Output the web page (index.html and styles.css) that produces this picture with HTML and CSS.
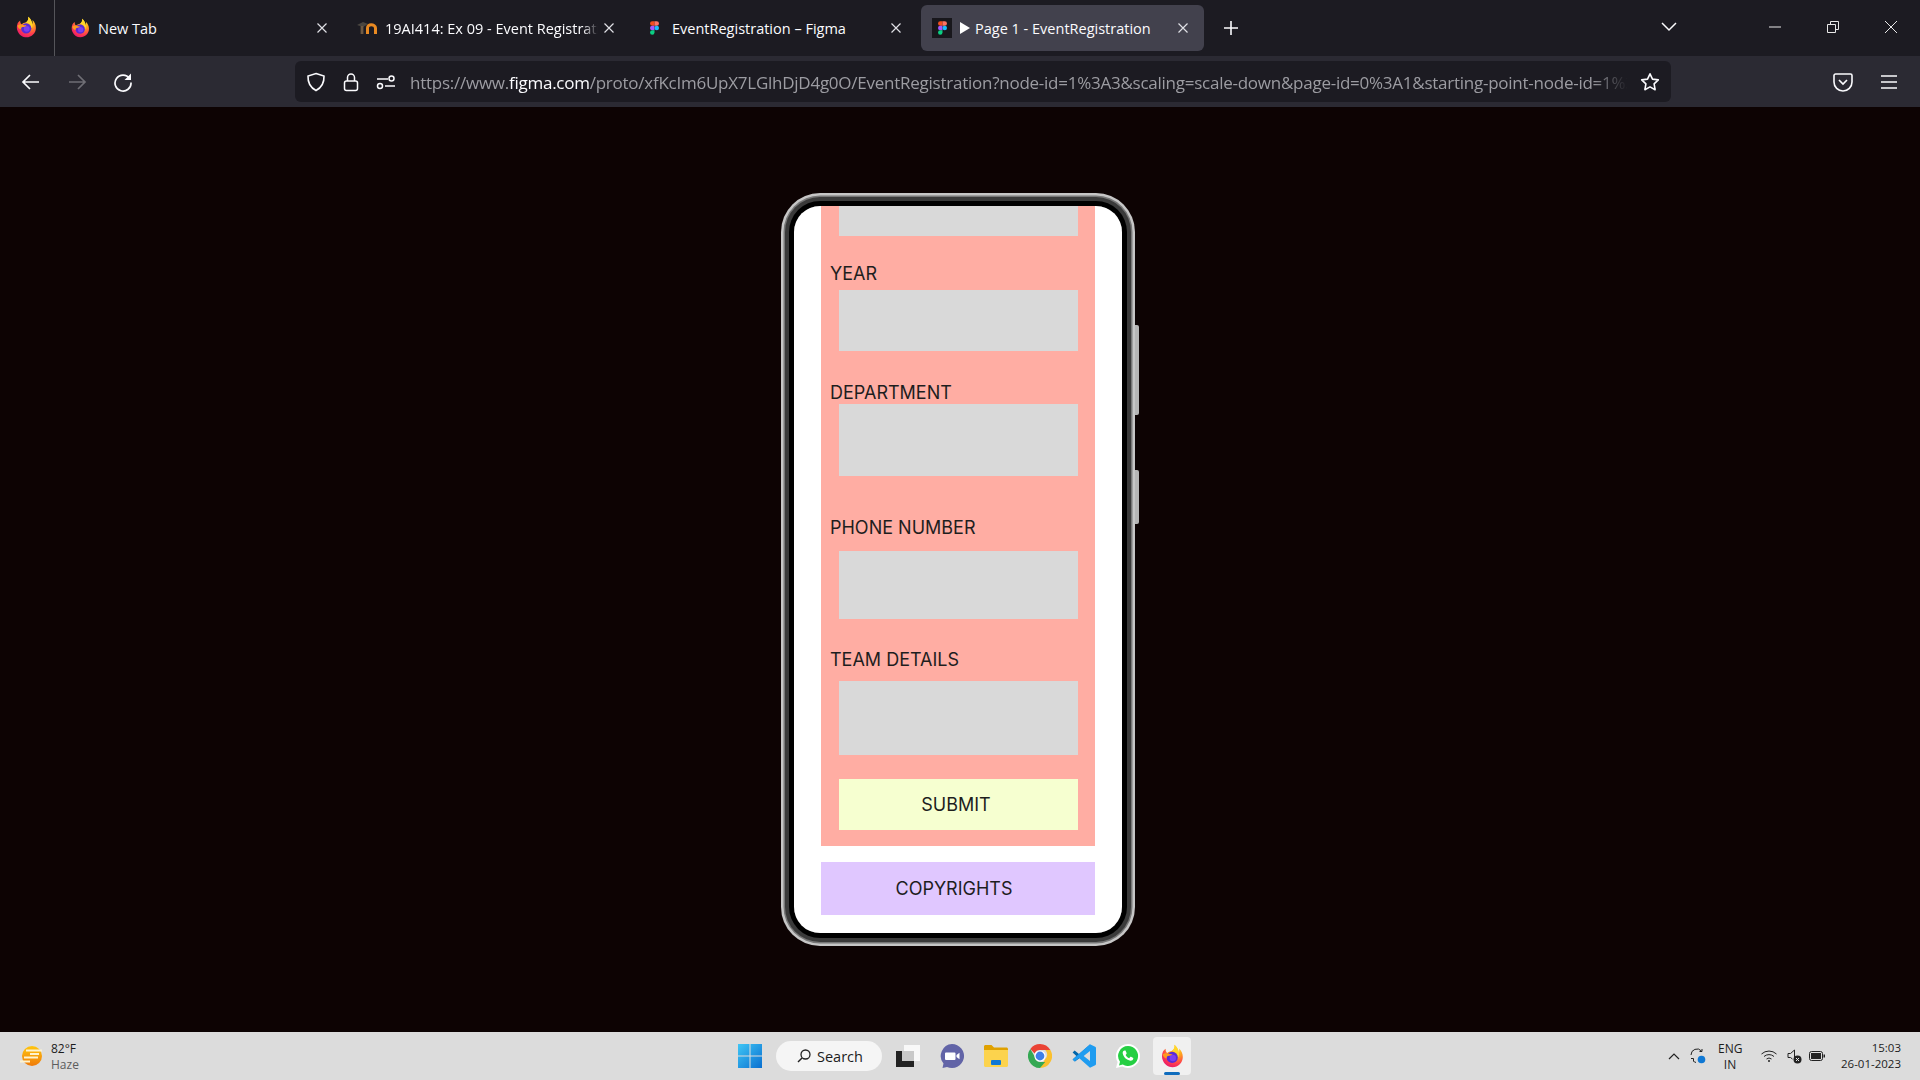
FILE: index.html
```html
<!DOCTYPE html>
<html lang="en">
<head>
    <meta charset="UTF-8">
    <meta name="viewport" content="width=device-width, initial-scale=1.0">
    <title>Page 1 - EventRegistration</title>
    <link rel="stylesheet" href="styles.css">
</head>
<body>
    <svg class="icon-defs" width="0" height="0">
        <defs>
            <radialGradient id="ff-body" cx="70%" cy="15%" r="95%">
                <stop offset="0" stop-color="#ffe226"/>
                <stop offset="0.4" stop-color="#ff9a1f"/>
                <stop offset="0.72" stop-color="#ff3d4e"/>
                <stop offset="1" stop-color="#e6126f"/>
            </radialGradient>
            <linearGradient id="win-blue" x1="0" y1="0" x2="1" y2="1">
                <stop offset="0" stop-color="#3fc6f5"/>
                <stop offset="1" stop-color="#0a6fd0"/>
            </linearGradient>
            <linearGradient id="sun" x1="0" y1="0" x2="0" y2="1">
                <stop offset="0" stop-color="#ffc60f"/>
                <stop offset="1" stop-color="#ef7a0a"/>
            </linearGradient>
        </defs>
        <symbol id="firefox" viewBox="0 0 24 24">
            <path fill="url(#ff-body)" d="M3 7.5C1.7 10.5 1.6 14 3 16.8 4.8 20.8 8.4 23.2 12.5 23.2 18.2 23.2 22.8 18.6 22.8 13 22.8 9.5 21.4 6.5 19 4.4 19.4 6.2 19.3 7.6 18.8 8.8 18.2 5.4 16.6 2.4 14.4 .8 15 3.4 14 5.4 12 6.8 10 7.4 8.2 7.8 7.2 9.2 6.2 8.2 5.4 6.5 5.7 4.8 4.6 5.6 3.6 6.4 3 7.5Z"/>
            <path fill="#ffd52a" d="M14.4.8C17 2.6 18.8 6 19 9.5 19.2 11 18.8 12.5 18 13.5 17.6 10 15.4 8 12.2 7 14 5.4 15 3.4 14.4.8Z"/>
            <circle cx="12.2" cy="13.4" r="5.6" fill="#5a2ad6"/>
            <circle cx="12.8" cy="14" r="3.2" fill="#7b3ff0"/>
            <path fill="#ff9a1f" d="M2.6 10.5C4.2 9 6.6 8.8 8.6 9.6 10 10.2 11.4 10.4 12.6 10 11.6 11.6 9.6 11.8 8.2 12 7 12.2 6.4 13.2 6.8 14.4 5 14.4 3.4 13 2.6 10.5Z"/>
        </symbol>
        <symbol id="figma" viewBox="0 0 12 18">
            <path fill="#f24e1e" d="M6 0H3a3 3 0 0 0 0 6h3z"/>
            <path fill="#ff7262" d="M6 0h3a3 3 0 0 1 0 6H6z"/>
            <path fill="#a259ff" d="M6 6H3a3 3 0 0 0 0 6h3z"/>
            <circle cx="9" cy="9" r="3" fill="#1abcfe"/>
            <path fill="#0acf83" d="M6 12H3a3 3 0 1 0 3 3z"/>
        </symbol>
        <symbol id="close" viewBox="0 0 12 12">
            <path d="M1.5 1.5l9 9M10.5 1.5l-9 9" fill="none" stroke="currentColor" stroke-width="1.2"/>
        </symbol>
    </svg>

    <div class="tabbar">
        <div class="ff-menu">
            <svg class="ic-22"><use href="#firefox"/></svg>
        </div>
        <div class="tabs">
            <div class="tab">
                <svg class="tab-icon ic-20"><use href="#firefox"/></svg>
                <span class="tab-title">New Tab</span>
                <svg class="tab-close"><use href="#close"/></svg>
            </div>
            <div class="tab">
                <svg class="tab-icon moodle-ic" viewBox="0 0 21 12">
                    <path d="M0 3l6-3 5 2-5 3z" fill="#4a4640"/>
                    <path d="M5 12V4" fill="none" stroke="#6e5a44" stroke-width="2.800"/>
                    <path d="M10.500 12V6c0-2 1.500-3.200 3.700-3.200S18.500 4 18.500 6v6" fill="none" stroke="#e98a22" stroke-width="3"/>
                </svg>
                <span class="tab-title tab-title-fade">19AI414: Ex 09 - Event Registration</span>
                <svg class="tab-close"><use href="#close"/></svg>
            </div>
            <div class="tab">
                <span class="tab-icon figma-box figma-box-plain"><svg class="figma-logo"><use href="#figma"/></svg></span>
                <span class="tab-title">EventRegistration – Figma</span>
                <svg class="tab-close"><use href="#close"/></svg>
            </div>
            <div class="tab tab-active">
                <span class="tab-icon figma-box"><svg class="figma-logo"><use href="#figma"/></svg></span>
                <span class="tab-title">
                    <svg class="play" viewBox="0 0 10 12"><path d="M0 0l10 6-10 6z" fill="#fff"/></svg>Page 1 - EventRegistration
                </span>
                <svg class="tab-close"><use href="#close"/></svg>
            </div>
        </div>
        <svg class="new-tab" viewBox="0 0 16 16"><path d="M8 1v14M1 8h14" stroke="#fbfbfe" stroke-width="1.600"/></svg>
        <div class="tabbar-right">
            <svg class="list-tabs" viewBox="0 0 16 10"><path d="M1 1l7 7 7-7" fill="none" stroke="#fbfbfe" stroke-width="1.500"/></svg>
            <div class="win-btn"><svg class="win-ic" viewBox="0 0 14 14"><path d="M1 7h12" stroke="#e8e8e8" stroke-width="1"/></svg></div>
            <div class="win-btn"><svg class="win-ic" viewBox="0 0 14 14"><path d="M1.500 4.500h8v8h-8zM4.500 4.500v-3h8v8h-3" fill="none" stroke="#e8e8e8" stroke-width="1"/></svg></div>
            <div class="win-btn"><svg class="win-ic" viewBox="0 0 14 14"><path d="M1 1l12 12M13 1L1 13" stroke="#e8e8e8" stroke-width="1"/></svg></div>
        </div>
    </div>

    <div class="toolbar">
        <div class="tool-btn">
            <svg class="ic-20" viewBox="0 0 20 20"><path d="M18 10H2.500M9 3l-7 7 7 7" fill="none" stroke="#fbfbfe" stroke-width="1.700"/></svg>
        </div>
        <div class="tool-btn">
            <svg class="ic-20" viewBox="0 0 20 20"><path d="M2 10h15.500M11 3l7 7-7 7" fill="none" stroke="#6f6e75" stroke-width="1.700"/></svg>
        </div>
        <div class="tool-btn">
            <svg class="ic-20" viewBox="0 0 20 20"><path d="M16.600 6.500A8 8 0 1 0 18 10.500" fill="none" stroke="#fbfbfe" stroke-width="1.700"/><path d="M18 1.500V8h-6.500z" fill="#fbfbfe"/></svg>
        </div>
        <div class="urlbar">
            <svg class="url-ic" viewBox="0 0 20 20"><path d="M10 1.500l8 2.500c.3 7-2.200 11.500-8 14.500C4.200 15.500 1.700 11 2 4z" fill="none" stroke="#fbfbfe" stroke-width="1.600"/></svg>
            <svg class="url-ic" viewBox="0 0 20 20"><path d="M6.500 9V5.500a3.500 3.500 0 0 1 7 0V9" fill="none" stroke="#fbfbfe" stroke-width="1.500"/><rect x="3.500" y="9" width="13" height="9.500" rx="2" fill="none" stroke="#fbfbfe" stroke-width="1.500"/></svg>
            <svg class="url-ic" viewBox="0 0 20 20"><path d="M1 7h11M9 14h10" stroke="#fbfbfe" stroke-width="1.600"/><circle cx="15.500" cy="6.500" r="2.500" fill="none" stroke="#fbfbfe" stroke-width="1.500"/><circle cx="4" cy="14" r="2.500" fill="none" stroke="#fbfbfe" stroke-width="1.500"/></svg>
            <div class="url-text">https://www.<b>figma.com</b>/proto/xfKcIm6UpX7LGlhDjD4g0O/EventRegistration?node-id=1%3A3&amp;scaling=scale-down&amp;page-id=0%3A1&amp;starting-point-node-id=1%3A3</div>
            <svg class="url-star" viewBox="0 0 20 20"><path d="M10 1.800l2.500 5.300 5.800.8-4.200 4 1 5.800-5.100-2.800-5.100 2.800 1-5.800-4.200-4 5.800-.8z" fill="none" stroke="#fbfbfe" stroke-width="1.600" stroke-linejoin="round"/></svg>
        </div>
        <div class="tool-right">
            <div class="tool-btn">
                <svg class="ic-20" viewBox="0 0 20 20"><path d="M2.500 2h15c.8 0 1.500.7 1.500 1.500V10a9 9 0 0 1-18 0V3.500C1 2.700 1.700 2 2.500 2z" fill="none" stroke="#fbfbfe" stroke-width="1.600"/><path d="M6 8l4 4 4-4" fill="none" stroke="#fbfbfe" stroke-width="1.700"/></svg>
            </div>
            <div class="tool-btn">
                <svg class="ic-20" viewBox="0 0 20 20"><path d="M2 4h16M2 10h16M2 16h16" stroke="#fbfbfe" stroke-width="1.600"/></svg>
            </div>
        </div>
    </div>

    <div class="stage">
        <div class="phone">
            <span class="side-btn side-btn-long"></span>
            <span class="side-btn side-btn-short"></span>
            <div class="screen">
                <div class="form-panel">
                    <div class="input-box box-clip"></div>

                    <div class="field-label label-year">YEAR</div>
                    <div class="input-box box-year"></div>

                    <div class="field-label label-dept">DEPARTMENT</div>
                    <div class="input-box box-dept"></div>

                    <div class="field-label label-phone">PHONE NUMBER</div>
                    <div class="input-box box-phone"></div>

                    <div class="field-label label-team">TEAM DETAILS</div>
                    <div class="input-box box-team"></div>

                    <div class="submit-btn">SUBMIT</div>
                </div>
                <div class="copyrights">COPYRIGHTS</div>
            </div>
        </div>
    </div>

    <div class="taskbar">
        <div class="tb-left">
            <svg class="weather-ic" viewBox="0 0 24 20">
                <circle cx="12" cy="10" r="10" fill="url(#sun)"/>
                <path d="M6 4.500h16M10 8h9M0 15.500h10M4 11.500h14" stroke="#fdf3d0" stroke-width="1.800"/>
            </svg>
            <div class="weather-text">
                <div class="weather-temp">82°F</div>
                <div class="weather-desc">Haze</div>
            </div>
        </div>
        <div class="tb-center">
            <div class="tb-slot">
                <svg class="ic-24" viewBox="0 0 23 23"><path fill="url(#win-blue)" d="M0 0h11v11H0zM12 0h11v11H12zM0 12h11v11H0zM12 12h11v11H12z"/></svg>
            </div>
            <div class="search-pill">
                <svg class="search-ic" viewBox="0 0 14 14"><circle cx="8.500" cy="5.500" r="4.500" fill="none" stroke="#222" stroke-width="1.300"/><path d="M5 9l-4 4" stroke="#222" stroke-width="1.500"/></svg>
                <span>Search</span>
            </div>
            <div class="tb-slot">
                <svg class="ic-24" viewBox="0 0 24 22"><rect x="8" y="0" width="16" height="16" fill="#f8f8f8"/><rect x="0" y="6" width="18" height="16" fill="#222"/><rect x="6" y="6" width="12" height="10" fill="#c9c9c9"/></svg>
            </div>
            <div class="tb-slot">
                <svg class="ic-24" viewBox="0 0 24 24"><path fill="#6264a7" d="M12 0a12 12 0 1 1-5 22.900L2.500 24l1-4.400A12 12 0 0 1 12 0z"/><path fill="#fff" d="M6 8.500h8.500a1 1 0 0 1 1 1V15a1 1 0 0 1-1 1H6a1 1 0 0 1-1-1V9.500a1 1 0 0 1 1-1zM16.500 11l3-2.200v6.400l-3-2.200z"/></svg>
            </div>
            <div class="tb-slot">
                <svg class="ic-24" viewBox="0 0 24 22"><path fill="#e0a100" d="M0 1.500C0 .7.700 0 1.500 0h6l2.500 2.500h12.500c.8 0 1.500.7 1.500 1.500v4H0z"/><path fill="#fcd34d" d="M0 5h24v15.500c0 .8-.7 1.500-1.500 1.500h-21C.7 22 0 21.300 0 20.500z"/><rect x="7" y="15" width="10" height="5" rx="1" fill="#0f78d4"/></svg>
            </div>
            <div class="tb-slot">
                <svg class="ic-24" viewBox="0 0 24 24">
                    <path fill="#ea4335" d="M12 0a12 12 0 0 1 10.400 6H12a6 6 0 0 0-5.400 3.400L2.300 5A12 12 0 0 1 12 0z"/>
                    <path fill="#fbc02d" d="M22.400 6A12 12 0 0 1 12 24l5.200-9A6 6 0 0 0 17.200 6z"/>
                    <path fill="#34a853" d="M12 24A12 12 0 0 1 2.300 5l4.400 7.500A6 6 0 0 0 12 18h5.200z"/>
                    <circle cx="12" cy="12" r="5.600" fill="#fff"/>
                    <circle cx="12" cy="12" r="4.400" fill="#3f7fe8"/>
                </svg>
            </div>
            <div class="tb-slot">
                <svg class="ic-24" viewBox="0 0 24 24">
                    <path fill="#0065a9" d="M.6 8.400l2-1.800L7 9.900l11-9.300L18 6 6 15.200 3 17.400.6 15.600 4.400 12z"/>
                    <path fill="#1f9cf0" d="M18 .2l5.200 2.500c.5.200.8.700.8 1.300v16c0 .6-.3 1.100-.8 1.300L18 23.800 7 14.100l-4.400 3.300-2-1.800L18 .2zM18 7l-6.300 5L18 17z"/>
                </svg>
            </div>
            <div class="tb-slot">
                <svg class="ic-24" viewBox="0 0 24 24">
                    <path fill="#fff" d="M12 0a12 12 0 1 1-5.800 22.500L0 24l1.600-6A12 12 0 0 1 12 0z"/>
                    <path fill="#25cf43" d="M12 2a10 10 0 1 1-5.200 18.500l-3.800 1 1-3.700A10 10 0 0 1 12 2z"/>
                    <path fill="#fff" d="M8.800 6.600c.5 0 .8 0 1 .6l.8 1.900c.1.300 0 .6-.2.800l-.8 1c.8 1.500 2 2.600 3.600 3.300l1-1.200c.2-.3.500-.3.800-.2l1.900.9c.4.200.5.400.4.800-.2 1.500-1.500 2.300-2.800 2.200-3.900-.4-7.300-3.800-7.800-7.400-.2-1.300.7-2.700 2.100-2.700z"/>
                </svg>
            </div>
            <div class="tb-slot tb-slot-active">
                <svg class="ic-24"><use href="#firefox"/></svg>
                <span class="running-bar"></span>
            </div>
        </div>
        <div class="tb-tray">
            <svg class="tray-chevron" viewBox="0 0 12 7"><path d="M1 6l5-5 5 5" fill="none" stroke="#222" stroke-width="1.200"/></svg>
            <svg class="tray-sync" viewBox="0 0 16 16"><path d="M1 7a6 6 0 0 1 10.500-4M9.500 3.500h2.500V1M1 10.500h2.500V13.500M3.500 13a6 6 0 0 0 2.500 1.500" fill="none" stroke="#222" stroke-width="1"/><circle cx="11.500" cy="11.500" r="3.800" fill="#0f78d4"/></svg>
            <div class="tray-lang">
                <div>ENG</div>
                <div>IN</div>
            </div>
            <svg class="tray-wifi" viewBox="0 0 16 12"><path d="M.5 4a11 11 0 0 1 15 0M3 6.500a7.500 7.500 0 0 1 10 0M5.500 9a4 4 0 0 1 5 0" fill="none" stroke="#222" stroke-width="1"/><circle cx="8" cy="11" r="1" fill="#222"/></svg>
            <svg class="tray-sound" viewBox="0 0 15 15"><path d="M1 4.500h2.500L7.500 1v8M1 4.500v4h2.500l2 1.600" fill="none" stroke="#222" stroke-width="1"/><circle cx="10.500" cy="10.500" r="4" fill="#222"/><path d="M9 9l3 3M12 9l-3 3" stroke="#e6e6e6" stroke-width="1"/></svg>
            <svg class="tray-battery" viewBox="0 0 16 10"><rect x=".5" y=".5" width="13" height="9" rx="2" fill="none" stroke="#222"/><rect x="2" y="2" width="10" height="6" fill="#222"/><rect x="14.500" y="3.500" width="1.500" height="3" fill="#222"/></svg>
            <div class="tray-clock">
                <div>15:03</div>
                <div>26-01-2023</div>
            </div>
        </div>
    </div>
</body>
</html>
```

FILE: styles.css
```css
* {
    margin: 0;
    padding: 0;
    box-sizing: border-box;
}

html, body {
    height: 100%;
    overflow: hidden;
}

body {
    display: flex;
    flex-direction: column;
    font-family: 'Open Sans', 'Noto Sans', sans-serif;
    background: #0d0303;
}

svg {
    display: block;
    flex-shrink: 0;
}

.icon-defs {
    position: absolute;
}

.ic-20 {
    width: 20px;
    height: 20px;
}

.ic-22 {
    width: 22px;
    height: 22px;
}

.ic-24 {
    width: 24px;
    height: 24px;
}

/* browser tabs */
.tabbar {
    display: flex;
    align-items: center;
    height: 56px;
    background: #1c1b22;
    color: #fbfbfe;
}

.ff-menu {
    display: flex;
    align-items: center;
    justify-content: center;
    width: 55px;
    height: 56px;
    border-right: 1px solid #55555a;
    padding: 0 3px 2px 0;
}

.tabs {
    display: flex;
    gap: 4px;
    margin-left: 5px;
}

.tab {
    display: flex;
    align-items: center;
    width: 283px;
    height: 46px;
    padding-left: 10px;
    border-radius: 6px;
    font-size: 14.5px;
    white-space: nowrap;
}

.tab-active {
    padding-left: 11px;
    background: #42414d;
}

.tab-icon {
    margin-right: 8px;
}

.moodle-ic {
    width: 21px;
    height: 12px;
    margin-right: 7px;
}

.figma-box {
    display: flex;
    align-items: center;
    justify-content: center;
    width: 20px;
    height: 20px;
    background: #18171c;
}

.figma-box-plain {
    background: none;
}

.figma-logo {
    width: 9px;
    height: 14px;
}

.tab-title {
    display: flex;
    align-items: center;
    flex: 1;
    min-width: 0;
    overflow: hidden;
}

.tab-title-fade {
    display: block;
    -webkit-mask-image: linear-gradient(to right, #000 93%, transparent 100%);
    mask-image: linear-gradient(to right, #000 93%, transparent 100%);
}

.play {
    width: 10px;
    height: 12px;
    margin-right: 5px;
}

.tab-close {
    width: 12px;
    height: 12px;
    margin: 0 15px 0 5px;
    color: #e0e0e6;
}

.new-tab {
    width: 16px;
    height: 16px;
    margin-left: 19px;
}

.tabbar-right {
    display: flex;
    align-items: center;
    margin-left: auto;
}

.list-tabs {
    width: 16px;
    height: 10px;
    margin-right: 69px;
    margin-bottom: 2px;
}

.win-btn {
    display: flex;
    align-items: center;
    justify-content: center;
    width: 58px;
    height: 56px;
}

.win-ic {
    width: 14px;
    height: 14px;
    margin-bottom: 2px;
}

/* address row */
.toolbar {
    display: flex;
    align-items: center;
    height: 51px;
    padding: 0 8px;
    background: #2b2a33;
}

.tool-btn {
    display: flex;
    align-items: center;
    justify-content: center;
    width: 46px;
    height: 40px;
}

.urlbar {
    display: flex;
    align-items: center;
    width: 1376px;
    height: 41px;
    margin-left: 149px;
    padding: 0 11px;
    background: #1c1b22;
    border-radius: 6px;
}

.url-ic {
    width: 20px;
    height: 20px;
    margin-right: 15px;
}

.url-ic:nth-child(3) {
    margin-right: 14px;
}

.url-text {
    flex: 1;
    min-width: 0;
    padding-top: 1px;
    overflow: hidden;
    white-space: nowrap;
    font-size: 17px;
    letter-spacing: -0.25px;
    color: #9c9ca2;
    -webkit-mask-image: linear-gradient(to right, #000 97%, transparent 100%);
    mask-image: linear-gradient(to right, #000 97%, transparent 100%);
}

.url-text b {
    font-weight: 400;
    color: #fbfbfe;
}

.url-star {
    width: 20px;
    height: 20px;
    margin-left: 12px;
}

.tool-right {
    display: flex;
    margin-left: auto;
}

/* figma prototype */
.stage {
    flex: 1;
    display: flex;
    align-items: center;
    justify-content: center;
    padding-right: 4px;
    background: #0d0303;
}

.phone {
    position: relative;
    width: 328px;
    height: 727px;
    border-radius: 26px;
    box-shadow: 0 0 0 5px #000, 0 0 0 9px #3a3a3a, 0 0 0 10.5px #777, 0 0 0 13px #c6c6c6;
}

.side-btn {
    position: absolute;
    left: 341px;
    width: 4px;
    background: #b5b5b5;
    border-radius: 0 2px 2px 0;
}

.side-btn-long {
    top: 119px;
    height: 90px;
}

.side-btn-short {
    top: 264px;
    height: 54px;
}

.screen {
    height: 100%;
    padding: 0 27px;
    background: #fff;
    border-radius: 26px;
    overflow: hidden;
    font-family: Inter, 'Liberation Sans', sans-serif;
    font-size: 18px;
    color: #1e1e1e;
}

.form-panel {
    padding-bottom: 16px;
    background: #ffada3;
}

.input-box {
    margin: 0 17px 0 18px;
    background: #d9d9d9;
}

.field-label {
    height: 21px;
    line-height: 21px;
    padding-left: 9px;
}

.box-clip { height: 30px; }

.label-year { margin: 27px 0 6px; }
.box-year { height: 61px; }

.label-dept { margin: 31px 0 1px; }
.box-dept { height: 72px; }

.label-phone { margin: 41px 0 13px; }
.box-phone { height: 68px; }

.label-team { margin: 30px 0 11px; }
.box-team { height: 74px; }

.submit-btn {
    display: flex;
    align-items: center;
    justify-content: center;
    height: 51px;
    margin: 24px 17px 0 18px;
    padding: 0 5px 1px 0;
    background: #f6ffd0;
}

.copyrights {
    display: flex;
    align-items: center;
    justify-content: center;
    height: 53px;
    margin-top: 16px;
    padding: 0 8px 1px 0;
    background: #e0c7ff;
}

/* windows taskbar */
.taskbar {
    display: flex;
    align-items: center;
    height: 48px;
    background: #dcdcdc;
    color: #1c1c1c;
    font-size: 12px;
}

.tb-left {
    display: flex;
    align-items: center;
    width: 728px;
    padding-left: 20px;
}

.weather-ic {
    width: 24px;
    height: 20px;
    margin-right: 7px;
}

.weather-text {
    margin-top: 2px;
    line-height: 16px;
}

.weather-desc {
    color: #5d5d5d;
}

.tb-center {
    display: flex;
    align-items: center;
}

.tb-slot {
    position: relative;
    display: flex;
    align-items: center;
    justify-content: center;
    width: 44px;
    height: 38px;
}

.tb-slot-active {
    width: 38px;
    margin: 0 3px;
    background: #f0f0f0;
    border-radius: 4px;
}

.running-bar {
    position: absolute;
    left: 11px;
    bottom: 0;
    width: 16px;
    height: 3px;
    background: #0f6cbd;
    border-radius: 2px;
}

.search-pill {
    display: flex;
    align-items: center;
    width: 106px;
    height: 30px;
    margin: 0 4px;
    padding-left: 21px;
    background: #f5f5f5;
    border-radius: 15px;
    font-size: 14.5px;
}

.search-ic {
    width: 14px;
    height: 14px;
    margin-right: 6px;
}

.tb-tray {
    display: flex;
    align-items: center;
    margin-left: auto;
    padding-right: 19px;
}

.tray-chevron {
    width: 12px;
    height: 7px;
    margin-right: 10px;
}

.tray-sync {
    width: 16px;
    height: 16px;
    margin-right: 12px;
}

.tray-lang {
    width: 24px;
    text-align: center;
    line-height: 16px;
    margin: 2px 19px 0 0;
}

.tray-wifi {
    width: 16px;
    height: 12px;
    margin-right: 10px;
}

.tray-sound {
    width: 15px;
    height: 15px;
    margin-right: 7px;
}

.tray-battery {
    width: 16px;
    height: 10px;
    margin-right: 16px;
}

.tray-clock {
    text-align: right;
    line-height: 16px;
    font-size: 11.5px;
}
```
